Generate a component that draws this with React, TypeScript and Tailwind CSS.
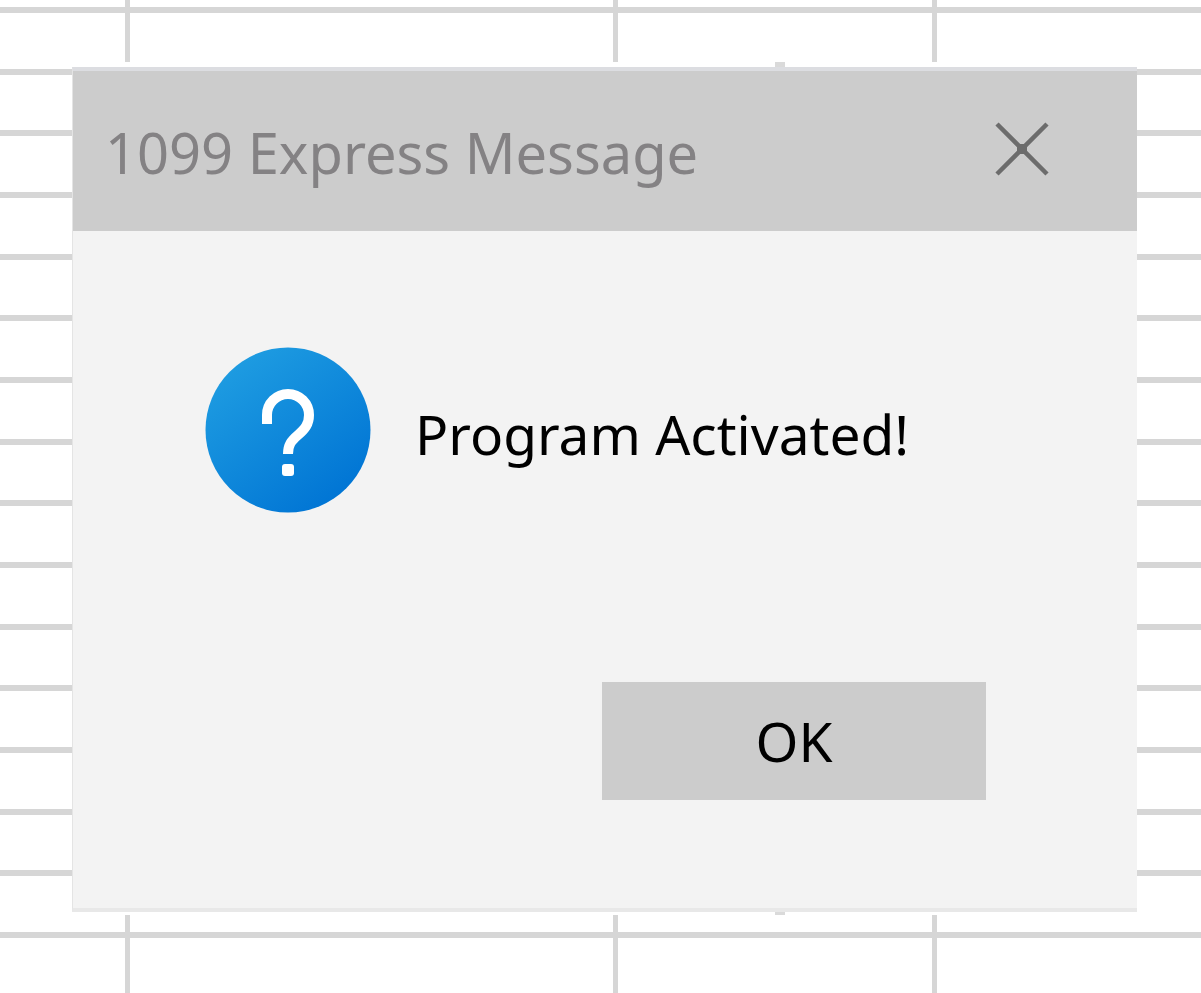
import { useState } from 'react'

const ROWS = Array.from({ length: 17 }, (_, i) => i)

function Spreadsheet() {
  return (
    <div
      aria-hidden="true"
      className="col-start-1 row-start-1 grid grid-cols-[130px_488px_319px_1fr] grid-rows-[13px_repeat(15,1fr)_55px]"
    >
      {ROWS.map((row) => (
        <div
          key={row}
          className="col-span-4 grid grid-cols-subgrid border-b-6 border-[#d6d6d6] last:border-b-0"
        >
          <div className="border-r-5 border-[#d6d6d6]" />
          <div className="border-r-5 border-[#d6d6d6]" />
          <div className="border-r-5 border-[#d6d6d6]" />
          <div />
        </div>
      ))}
    </div>
  )
}

function QuestionIcon() {
  return (
    <svg viewBox="0 0 166 166" className="size-[166px] shrink-0" aria-hidden="true">
      <defs>
        <linearGradient id="disc" x1="0.15" y1="0.1" x2="0.8" y2="0.95">
          <stop offset="0" stopColor="#1e9ce1" />
          <stop offset="1" stopColor="#0074d4" />
        </linearGradient>
      </defs>
      <circle cx="83" cy="83" r="82.5" fill="url(#disc)" />
      <path
        d="M62 77 V68 A21 21 0 0 1 104 68 C104 77 100 82 93 88 C86 94 83 98 83 107"
        fill="none"
        stroke="#fff"
        strokeWidth="10"
      />
      <rect x="77" y="117" width="12" height="12" rx="3" fill="#fff" />
    </svg>
  )
}

function CloseIcon() {
  return (
    <svg viewBox="0 0 54 54" className="size-[54px]" aria-hidden="true">
      <path
        d="M2 2 L52 52 M52 2 L2 52"
        fill="none"
        stroke="#6c6c6c"
        strokeWidth="4.5"
      />
      <rect x="22" y="22" width="10" height="10" fill="#6c6c6c" />
    </svg>
  )
}

function App() {
  const [isOpen, setIsOpen] = useState<boolean>(true)

  return (
    <main className="grid min-h-screen w-full grid-cols-1 overflow-hidden bg-white font-['Noto_Sans','Open_Sans',sans-serif]">
      <Spreadsheet />
      {isOpen && (
        <div className="z-10 col-start-1 row-start-1 mt-[62px] mr-16 mb-[78px] ml-[72px] flex flex-col bg-white">
          <div className="ml-[703px] h-[5px] w-[10px] bg-[#dadada]" />
          <section
            role="dialog"
            aria-labelledby="dialog-title"
            className="flex flex-1 flex-col border-t-4 border-b-4 border-l border-t-[#dcdde1] border-b-[#e8e8e8] border-l-[#e4e4e4] bg-[#f3f3f3]"
          >
            <header className="flex h-40 items-center justify-between bg-[#cccccc] pr-[88px] pl-8">
              <h1
                id="dialog-title"
                className="pt-0.5 text-[56px] leading-[72px] whitespace-nowrap text-[#848284]"
              >
                1099 Express Message
              </h1>
              <button
                type="button"
                aria-label="Close"
                className="pb-1"
                onClick={() => setIsOpen(false)}
              >
                <CloseIcon />
              </button>
            </header>
            <div className="flex flex-1 flex-col justify-between pt-[116px] pb-[108px]">
              <div className="flex items-center gap-11 pl-[132px]">
                <QuestionIcon />
                <p className="pt-2 text-[55px] leading-[72px] whitespace-nowrap text-black">
                  Program Activated!
                </p>
              </div>
              <button
                type="button"
                onClick={() => setIsOpen(false)}
                className="mr-[151px] h-[118px] w-96 self-end bg-[#cccccc] text-[55px] leading-[72px] text-black"
              >
                OK
              </button>
            </div>
          </section>
          <div className="ml-[703px] h-[3px] w-[10px] bg-[#dadada]" />
        </div>
      )}
    </main>
  )
}

export default App
